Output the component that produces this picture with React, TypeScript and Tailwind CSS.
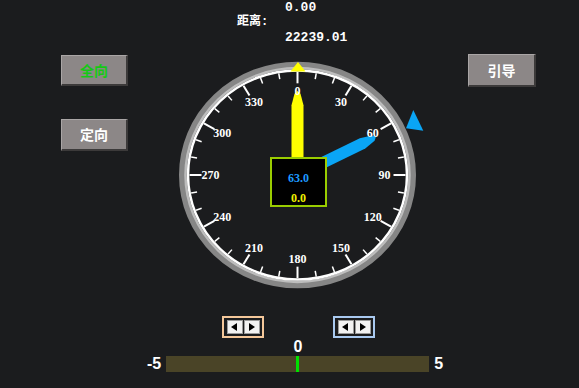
import React from "react";

const CX = 124.5;
const CY = 120;
const SY = 0.955;

function pt(a: number, r: number, sy = SY): [number, number] {
  const t = (a * Math.PI) / 180;
  return [CX + r * Math.sin(t), CY - r * Math.cos(t) * sy];
}

const NEEDLE = "0,-88 3,-85 6,-73 6,-12 -6,-12 -6,-73 -3,-85";

function Gauge() {
  const ticks = Array.from({ length: 36 }, (_, i) => i * 10);
  const labels = Array.from({ length: 12 }, (_, i) => i * 30);
  return (
    <svg width={252} height={240} viewBox="0 0 252 240" className="block shrink-0">
      {/* bezel */}
      <ellipse cx={CX} cy={CY} rx={115} ry={115 * SY} fill="none" stroke="#868686" strokeWidth={7} />
      <ellipse cx={CX} cy={CY} rx={112} ry={112 * SY} fill="none" stroke="#bdbdbd" strokeWidth={2.5} />
      <ellipse cx={CX} cy={CY} rx={109.5} ry={109.5 * SY} fill="none" stroke="#ffffff" strokeWidth={2.5} />

      {/* ticks */}
      {ticks.map((a) => {
        const major = a % 30 === 0;
        const [x1, y1] = pt(a, major ? 96 : 102);
        const [x2, y2] = pt(a, 108);
        return (
          <line key={a} x1={x1} y1={y1} x2={x2} y2={y2} stroke="#ffffff" strokeWidth={major ? 2 : 1.5} />
        );
      })}

      {/* markers */}
      <polygon points="125,7 117.5,16.5 132.5,16.5" fill="#ffff00" />
      <polygon points="240.3,55 233,73.3 250.3,75.7" fill="#0aa5f5" />

      {/* needles */}
      <g transform={`translate(${CX},${CY}) scale(1,${SY})`}>
        <polygon points={NEEDLE} fill="#ffff00" />
        <polygon points={NEEDLE} fill="#0aa5f5" transform="rotate(63)" />
      </g>

      {/* labels */}
      {labels.map((a) => {
        const [x, y] = pt(a, 87, 0.97);
        return (
          <text
            key={a}
            x={x}
            y={y}
            fill="#ffffff"
            fontFamily="'Liberation Serif', serif"
            fontWeight="bold"
            fontSize={12}
            textAnchor="middle"
            dominantBaseline="central"
          >
            {a}
          </text>
        );
      })}

      {/* readout box */}
      <rect x={98} y={103} width={55} height={48} fill="#000000" stroke="#9acd00" strokeWidth={2} />
      <text x={125.5} y={123} fill="#1e9bff" fontFamily="'Liberation Serif', serif" fontWeight="bold" fontSize={12} textAnchor="middle" dominantBaseline="central">
        63.0
      </text>
      <text x={125.5} y={143} fill="#f0f000" fontFamily="'Liberation Serif', serif" fontWeight="bold" fontSize={12} textAnchor="middle" dominantBaseline="central">
        0.0
      </text>
    </svg>
  );
}

function GrayButton({ label, color }: { label: string; color: string }) {
  return (
    <button
      className={`w-full h-full flex items-center justify-center bg-[#8c8787] border-t border-l border-[#aaa6a6] border-r-2 border-b-2 border-r-[#3c3a3a] border-b-[#3c3a3a] text-[14px] font-bold ${color}`}
      style={{ fontFamily: "'Noto Sans CJK SC', sans-serif" }}
    >
      {label}
    </button>
  );
}

function Arrow({ dir }: { dir: "l" | "r" }) {
  return (
    <div className="w-[16px] h-[14px] bg-[#f2f2f2] border border-[#9a9a9a] flex items-center justify-center">
      <svg width={7} height={8} viewBox="0 0 7 8">
        {dir === "l" ? <polygon points="6,0 6,8 0,4" fill="#000" /> : <polygon points="1,0 1,8 7,4" fill="#000" />}
      </svg>
    </div>
  );
}

function ArrowGroup({ border }: { border: string }) {
  return (
    <div className={`w-[42px] h-[22px] border-2 ${border} flex items-center justify-center gap-[1px]`}>
      <Arrow dir="l" />
      <Arrow dir="r" />
    </div>
  );
}

export default function App() {
  return (
    <div
      className="w-[579px] h-[388px] bg-[#1b1c1e] text-white flex flex-col overflow-hidden"
      style={{ fontFamily: "'Liberation Sans', sans-serif" }}
    >
      {/* header readout */}
      <div
        className="h-[54px] pl-[237px] text-[13px] leading-[15px] font-bold"
        style={{ fontFamily: "'Liberation Mono', 'Noto Sans CJK SC', monospace" }}
      >
        <div className="pl-[48px]">0.00</div>
        <div className="text-[12px]">距离:</div>
        <div className="pl-[48px]">22239.01</div>
      </div>

      {/* main row */}
      <div className="flex items-start">
        <div className="w-[173px] pl-[61px] pt-[1px] flex flex-col gap-[33px]">
          <div className="w-[67px] h-[31px] flex">
            <GrayButton label="全向" color="text-[#16c816]" />
          </div>
          <div className="w-[67px] h-[32px] flex">
            <GrayButton label="定向" color="text-white" />
          </div>
        </div>
        <div className="mt-[1px]">
          <Gauge />
        </div>
        <div className="pl-[43px]">
          <div className="w-[68px] h-[33px] flex">
            <GrayButton label="引导" color="text-white" />
          </div>
        </div>
      </div>

      {/* bottom controls */}
      <div className="mt-[21px] flex justify-center gap-[69px] pl-[18px]">
        <ArrowGroup border="border-[#f4c79a]" />
        <ArrowGroup border="border-[#a9c9f0]" />
      </div>
      <div className="mt-[1px] h-[16px] leading-[16px] text-[16px] font-bold text-center pl-[17px]">0</div>
      <div className="mt-[1px] flex items-center pl-[147px] text-[16px] leading-[16px] font-bold">
        <span>-5</span>
        <div className="ml-[5px] w-[263px] h-[16px] bg-[#4a4427] flex justify-center">
          <div className="w-[3px] h-full bg-[#00e000] ml-[-1px]" />
        </div>
        <span className="ml-[5px]">5</span>
      </div>
    </div>
  );
}
